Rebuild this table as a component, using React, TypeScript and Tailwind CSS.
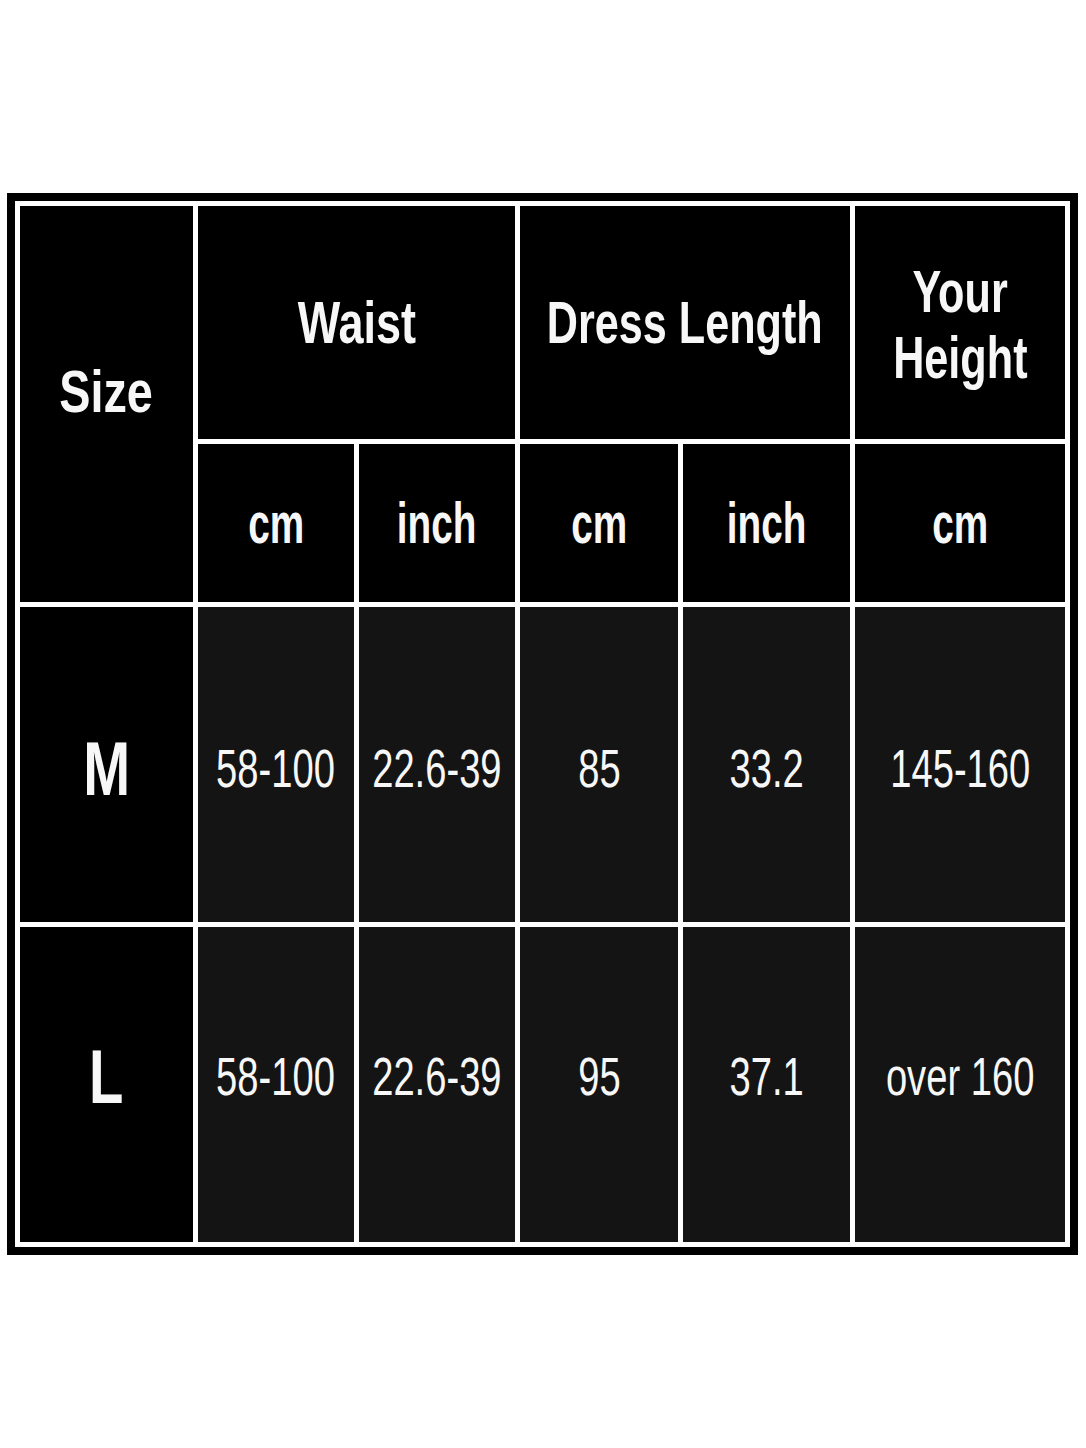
// Size chart — black table with white rules, condensed Arial-like type
const font = { fontFamily: '"Liberation Sans", Arial, sans-serif' };

function Cell({
  children,
  className = "",
}: {
  children?: React.ReactNode;
  className?: string;
}) {
  return (
    <div className={`flex items-center justify-center text-[#f7f7f7] ${className}`}>
      {children}
    </div>
  );
}

function Head({ text, scale = "scale-x-[0.75]" }: { text: string; scale?: string }) {
  return (
    <span className={`inline-block whitespace-nowrap text-[60px] font-bold leading-none ${scale}`}>
      {text}
    </span>
  );
}

function Val({ text }: { text: string }) {
  return (
    <span className="inline-block whitespace-nowrap text-[53px] font-normal leading-none scale-x-[0.72]">
      {text}
    </span>
  );
}

const rows = [
  { size: "M", pad: "pt-[8px]", vals: ["58-100", "22.6-39", "85", "33.2", "145-160"] },
  { size: "L", pad: "pb-[16px]", vals: ["58-100", "22.6-39", "95", "37.1", "over 160"] },
];

export default function App() {
  return (
    <div className="min-h-[1448px] w-[1086px] bg-white pt-[193px] pl-[7px]" style={font}>
      <div className="w-[1071px] bg-black p-[8px]">
        <div className="grid grid-cols-[173px_156px_156px_158px_167px_210px] grid-rows-[233px_158px_315px_315px] gap-[5px] bg-white p-[5px]">
          {/* header */}
          <Cell className="row-span-2 bg-black pb-[24px]">
            <Head text="Size" scale="scale-x-[0.78]" />
          </Cell>
          <Cell className="col-span-2 bg-black">
            <Head text="Waist" />
          </Cell>
          <Cell className="col-span-2 bg-black">
            <Head text="Dress Length" scale="scale-x-[0.72]" />
          </Cell>
          <Cell className="flex-col bg-black pt-[4px]">
            <Head text="Your" scale="scale-x-[0.72]" />
            <span className="h-[6px]" />
            <Head text="Height" scale="scale-x-[0.72]" />
          </Cell>

          {["cm", "inch", "cm", "inch", "cm"].map((u, i) => (
            <Cell key={i} className="bg-black">
              <span className="inline-block text-[57px] font-bold leading-none scale-x-[0.68]">
                {u}
              </span>
            </Cell>
          ))}

          {/* body */}
          {rows.map((r) => (
            <>
              <Cell key={r.size} className={`bg-black ${r.pad}`}>
                <span className="inline-block text-[76px] font-bold leading-none scale-x-[0.74]">
                  {r.size}
                </span>
              </Cell>
              {r.vals.map((v, j) => (
                <Cell key={r.size + j} className={`bg-[#141414] ${r.pad}`}>
                  <Val text={v} />
                </Cell>
              ))}
            </>
          ))}
        </div>
      </div>
    </div>
  );
}
